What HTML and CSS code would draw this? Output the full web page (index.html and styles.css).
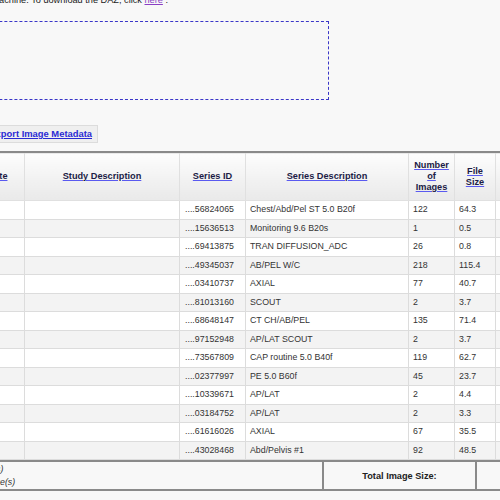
FILE: index.html
```html
<!DOCTYPE html>
<html>
<head>
<meta charset="utf-8">
<link rel="stylesheet" href="styles.css">
</head>
<body>
<div class="page">
  <div class="note"><span>This study is available for download to this machine. To download the DAZ, click <a class="visited" href="#">here</a> .</span></div>
  <div class="dropzone"></div>
  <div class="toolbar"><a class="btn" href="#">Export Image Metadata</a></div>
  <table class="grid">
    <colgroup>
      <col class="c-date"><col class="c-study"><col class="c-sid"><col class="c-sdesc"><col class="c-num"><col class="c-size"><col class="c-more">
    </colgroup>
    <thead>
      <tr>
        <th class="h-date"><a href="#">Study Date</a></th>
        <th><a href="#">Study Description</a></th>
        <th><a href="#">Series ID</a></th>
        <th><a href="#">Series Description</a></th>
        <th><a href="#">Number of Images</a></th>
        <th><a href="#">File Size</a></th>
        <th><a href="#">Modality</a></th>
      </tr>
    </thead>
    <tbody>
      <tr><td></td><td></td><td>....56824065</td><td>Chest/Abd/Pel ST 5.0 B20f</td><td>122</td><td>64.3</td><td></td></tr>
      <tr><td></td><td></td><td>....15636513</td><td>Monitoring 9.6 B20s</td><td>1</td><td>0.5</td><td></td></tr>
      <tr><td></td><td></td><td>....69413875</td><td>TRAN DIFFUSION_ADC</td><td>26</td><td>0.8</td><td></td></tr>
      <tr><td></td><td></td><td>....49345037</td><td>AB/PEL W/C</td><td>218</td><td>115.4</td><td></td></tr>
      <tr><td></td><td></td><td>....03410737</td><td>AXIAL</td><td>77</td><td>40.7</td><td></td></tr>
      <tr><td></td><td></td><td>....81013160</td><td>SCOUT</td><td>2</td><td>3.7</td><td></td></tr>
      <tr><td></td><td></td><td>....68648147</td><td>CT CH/AB/PEL</td><td>135</td><td>71.4</td><td></td></tr>
      <tr><td></td><td></td><td>....97152948</td><td>AP/LAT SCOUT</td><td>2</td><td>3.7</td><td></td></tr>
      <tr><td></td><td></td><td>....73567809</td><td>CAP routine 5.0 B40f</td><td>119</td><td>62.7</td><td></td></tr>
      <tr><td></td><td></td><td>....02377997</td><td>PE 5.0 B60f</td><td>45</td><td>23.7</td><td></td></tr>
      <tr><td></td><td></td><td>....10339671</td><td>AP/LAT</td><td>2</td><td>4.4</td><td></td></tr>
      <tr><td></td><td></td><td>....03184752</td><td>AP/LAT</td><td>2</td><td>3.3</td><td></td></tr>
      <tr><td></td><td></td><td>....61616026</td><td>AXIAL</td><td>67</td><td>35.5</td><td></td></tr>
      <tr><td></td><td></td><td>....43028468</td><td>Abd/Pelvis #1</td><td>92</td><td>48.5</td><td></td></tr>
    </tbody>
  </table>
  <table class="totals">
    <colgroup><col class="t-left"><col class="t-mid"><col class="t-right"></colgroup>
    <tr>
      <td class="counts"><div><em>14 Series(s)</em></div><div><em>1,161 Image(s)</em></div></td>
      <td class="label">Total Image Size:</td>
      <td></td>
    </tr>
  </table>
</div>
</body>
</html>
```

FILE: styles.css
```css
html, body {
  margin: 0;
  padding: 0;
}
body {
  background: #f8f8f8;
  font-family: "Liberation Sans", Arial, sans-serif;
  color: #333;
  overflow: hidden;
}
.page {
  margin-left: -66px;
  width: 700px;
}
.note {
  display: flex;
  justify-content: flex-end;
  width: 234px;
  margin-top: -7px;
  height: 14px;
  line-height: 14px;
  font-size: 9.2px;
  white-space: nowrap;
  color: #222;
}
.note a.visited {
  color: #8a3fc4;
}
.dropzone {
  box-sizing: border-box;
  margin-top: 14px;
  width: 395px;
  height: 79px;
  border: 1px dashed #3a36c8;
}
.toolbar {
  display: flex;
  justify-content: flex-end;
  width: 164px;
  margin-top: 25px;
}
.btn {
  display: block;
  box-sizing: border-box;
  height: 18px;
  line-height: 16px;
  padding: 0 5px 0 4px;
  border: 1px solid #dcdcdc;
  background: #efefef;
  font-size: 9.4px;
  font-weight: bold;
  color: #2a2ad4;
  white-space: nowrap;
}
.grid {
  margin-top: 8px;
  border-collapse: collapse;
  table-layout: fixed;
  width: 641px;
  border-top: 2px solid #8a8a8a;
  font-size: 8.8px;
}
.c-date { width: 90px; }
.c-study { width: 155px; }
.c-sid { width: 66px; }
.c-sdesc { width: 163px; }
.c-num { width: 46px; }
.c-size { width: 41px; }
.c-more { width: 80px; }
.grid th {
  height: 37px;
  padding: 5px 4px;
  border: 1px solid #e0e0e0;
  border-top-color: #d0d0d0;
  background: linear-gradient(#fdfdfd, #e9e9e9);
  font-size: 9.2px;
  font-weight: bold;
  line-height: 11px;
  text-align: center;
}
.grid th.h-date {
  padding-left: 12px;
}
.grid th a {
  color: #1c1c46;
  text-decoration-color: #5a5af0;
}
.grid td {
  padding: 2px 5px 2px 4px;
  line-height: 13.5px;
  border: 1px solid #dcdcdc;
  background: #fff;
  color: #333;
  white-space: nowrap;
  overflow: hidden;
}
.grid td:nth-child(3) {
  padding-left: 5px;
}
.grid tbody tr:nth-child(even) td {
  background: #f3f3f3;
}
.totals {
  border-collapse: collapse;
  table-layout: fixed;
  width: 700px;
  border-top: 2px solid #8a8a8a;
  border-bottom: 2px solid #8a8a8a;
  font-size: 8.8px;
}
.t-left { width: 389px; }
.t-mid { width: 153px; }
.t-right { width: 158px; }
.totals td {
  height: 27px;
  padding: 0 5px;
  border-left: 2px solid #8a8a8a;
  background: #f8f8f8;
}
.totals td:first-child {
  border-left: none;
}
.totals td.counts {
  padding-left: 22px;
  line-height: 13px;
  color: #333;
  white-space: nowrap;
}
.label {
  text-align: center;
  font-size: 9.2px;
  font-weight: bold;
  color: #222;
}
```
